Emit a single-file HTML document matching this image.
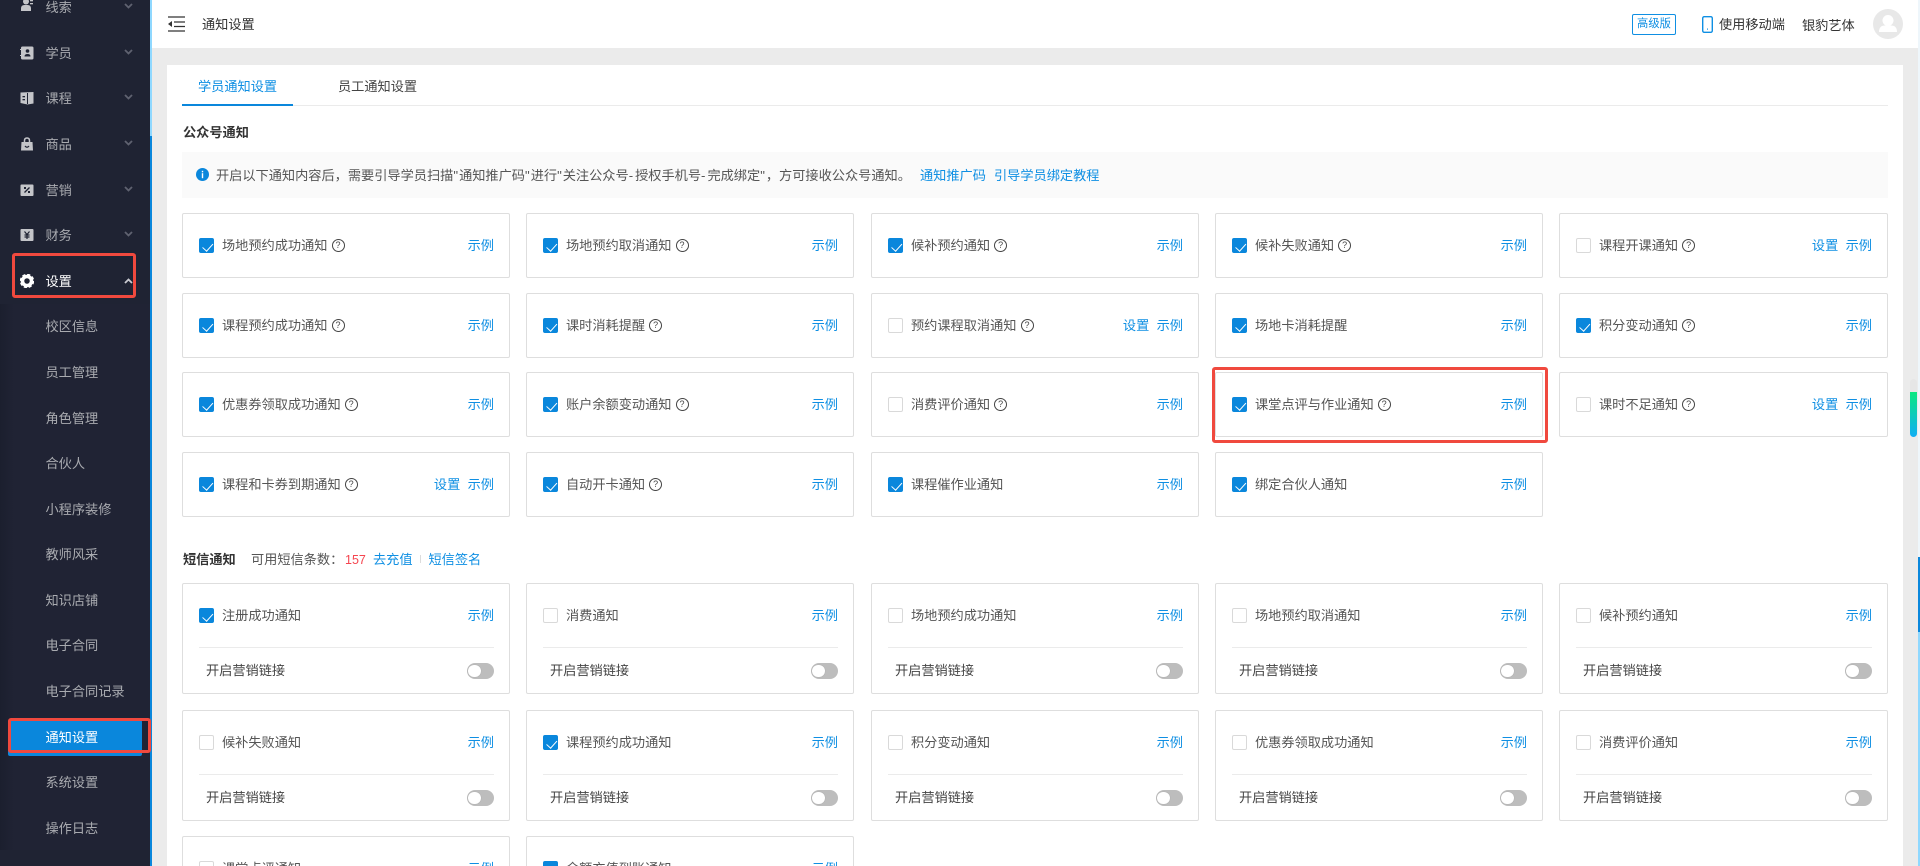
<!DOCTYPE html>
<html lang="zh-CN">
<head>
<meta charset="utf-8">
<title>通知设置</title>
<style>
*{box-sizing:border-box;margin:0;padding:0}
html,body{width:1920px;height:866px;overflow:hidden;background:#ebebeb}
body{position:relative;font-family:"Liberation Sans","Noto Sans CJK SC",sans-serif;font-size:13.2px;color:#555}
.a{position:absolute;white-space:nowrap}
.side{position:absolute;left:0;top:0;width:150px;height:866px;background:#1f2333}
.sub{position:absolute;left:0;top:304px;width:150px;height:546px;background:linear-gradient(90deg,#1b1f2e,#202334 14px)}
.m{position:absolute;left:45.5px;line-height:18px;color:#a9abb0;white-space:nowrap}
.ic{position:absolute;left:20px;width:14px;height:14px}
.ch{position:absolute;left:124px;width:9px;height:6px}
.card{position:absolute;width:328px;height:64.5px;background:#fff;border:1.2px solid #dedede;border-radius:2px}
.s{height:111px}
.e{height:30px;border-bottom:0;border-radius:2px 2px 0 0;overflow:hidden}
.b{position:absolute;left:16px;top:24px;width:15px;height:15px;border:1px solid #d9d9d9;border-radius:2px;background:#fff}
.on{background:#0a87dc;border-color:#0a87dc}
.on::after{content:"";position:absolute;left:4.5px;top:1.5px;width:4.5px;height:8.5px;border:solid #fff;border-width:0 1.2px 1.2px 0;transform:rotate(42deg)}
.t{position:absolute;left:39px;top:23px;line-height:18px;color:#555;white-space:nowrap}
.q{display:inline-block;width:13px;height:13px;margin-left:4px;border:1px solid #444;border-radius:50%;font:9px/11px "Liberation Sans",sans-serif;color:#444;text-align:center;vertical-align:2px}
.l{position:absolute;right:15px;top:23px;line-height:18px;color:#0f8fe3;white-space:nowrap}
.d{position:absolute;left:16px;right:15px;top:63px;height:1px;background:#ebebeb}
.k{position:absolute;left:23px;top:78px;line-height:18px;color:#444;white-space:nowrap}
.g{position:absolute;right:15px;top:79px;width:27px;height:15.5px;border-radius:8px;background:#bdbdbd}
.g::after{content:"";position:absolute;left:1px;top:1.5px;width:12.5px;height:12.5px;border-radius:50%;background:#fff;box-shadow:0 0 1px #999}
.c1{left:182px}.c2{left:526px}.c3{left:871px}.c4{left:1215px}.c5{left:1559px;width:329px}
.r{position:absolute;border:3px solid #f0493e;border-radius:3px}
.u{letter-spacing:1px}
.h{letter-spacing:2px}
</style>
</head>
<body>
<div class="side"></div>
<div class="sub"></div>
<div class="a" style="left:150px;top:0;width:2px;height:136px;background:#8fd8ff"></div>
<div class="a" style="left:150px;top:136px;width:2px;height:730px;background:#0a87dc"></div>

<svg class="ic" style="top:-2px" viewBox="0 0 14 14" fill="#c4c5c9"><circle cx="6" cy="3.5" r="3"/><path d="M1 13v-2.500q0-3.500 3.500-3.500h3q3.500 0 3.500 3.500V13z"/><rect x="10" y="2" width="3" height="1.300"/><rect x="10" y="5" width="3" height="1.300"/></svg>
<svg class="ic" style="top:46px" viewBox="0 0 14 14"><rect x="1" y="0.500" width="12.500" height="13" rx="1.500" fill="#c4c5c9"/><circle cx="7.500" cy="5" r="1.800" fill="#1f2333"/><path d="M4.500 10.500q0-2.500 3-2.500t3 2.500z" fill="#1f2333"/><rect x="0" y="3" width="2" height="1" fill="#c4c5c9"/><rect x="0" y="9" width="2" height="1" fill="#c4c5c9"/></svg>
<svg class="ic" style="top:91px" viewBox="0 0 14 14"><path d="M0.500 1.500L13.500 1V12.500L7.500 13.500L0.500 12z" fill="#c4c5c9"/><rect x="2.500" y="5" width="2.500" height="1.300" fill="#1f2333"/><rect x="2.500" y="8" width="2.500" height="1.300" fill="#1f2333"/><rect x="7" y="2" width="1" height="11" fill="#1f2333"/></svg>
<svg class="ic" style="top:137px" viewBox="0 0 14 14"><path d="M1.500 5h11l.5 8.500H1z" fill="#c4c5c9"/><path d="M4.500 5.500V3.500q0-2.500 2.500-2.500t2.500 2.500v2" fill="none" stroke="#c4c5c9" stroke-width="1.500"/><path d="M5 9q2 2.500 4 0" fill="none" stroke="#1f2333" stroke-width="1.200"/></svg>
<svg class="ic" style="top:183px" viewBox="0 0 14 14"><rect x="0.500" y="1.500" width="13" height="11.500" rx="1" fill="#c4c5c9"/><path d="M4.500 9.500L9.500 4.500" stroke="#1f2333" stroke-width="1.300"/><rect x="4" y="4" width="2" height="2" fill="#1f2333"/><rect x="8" y="8" width="2" height="2" fill="#1f2333"/></svg>
<svg class="ic" style="top:228px" viewBox="0 0 14 14"><rect x="0.500" y="1" width="13" height="12" rx="1" fill="#c4c5c9"/><path d="M4.500 3.500L7 6.500L9.500 3.500M7 6.500V11M4.500 7h5M4.500 9h5" fill="none" stroke="#1f2333" stroke-width="1.200"/></svg>
<svg class="ic" style="top:274px" viewBox="0 0 14 14"><circle cx="7" cy="7" r="4.500" fill="none" stroke="#fff" stroke-width="3.500"/><circle cx="7" cy="7" r="6" fill="none" stroke="#fff" stroke-width="2.500" stroke-dasharray="3 1.700"/></svg>

<svg class="ch" style="top:3px" viewBox="0 0 9 6"><path d="M1 1L4.500 4.500L8 1" fill="none" stroke="#5f6270" stroke-width="1.800"/></svg>
<svg class="ch" style="top:49px" viewBox="0 0 9 6"><path d="M1 1L4.500 4.500L8 1" fill="none" stroke="#5f6270" stroke-width="1.800"/></svg>
<svg class="ch" style="top:94px" viewBox="0 0 9 6"><path d="M1 1L4.500 4.500L8 1" fill="none" stroke="#5f6270" stroke-width="1.800"/></svg>
<svg class="ch" style="top:140px" viewBox="0 0 9 6"><path d="M1 1L4.500 4.500L8 1" fill="none" stroke="#5f6270" stroke-width="1.800"/></svg>
<svg class="ch" style="top:186px" viewBox="0 0 9 6"><path d="M1 1L4.500 4.500L8 1" fill="none" stroke="#5f6270" stroke-width="1.800"/></svg>
<svg class="ch" style="top:231px" viewBox="0 0 9 6"><path d="M1 1L4.500 4.500L8 1" fill="none" stroke="#5f6270" stroke-width="1.800"/></svg>
<svg class="ch" style="top:278px" viewBox="0 0 9 6"><path d="M1 5L4.500 1.500L8 5" fill="none" stroke="#c9cad0" stroke-width="1.800"/></svg>

<div class="m" style="top:-1px">线索</div>
<div class="m" style="top:45px">学员</div>
<div class="m" style="top:90px">课程</div>
<div class="m" style="top:136px">商品</div>
<div class="m" style="top:182px">营销</div>
<div class="m" style="top:227px">财务</div>
<div class="m" style="top:273px;color:#fff">设置</div>
<div class="m" style="top:318px">校区信息</div>
<div class="m" style="top:364px">员工管理</div>
<div class="m" style="top:410px">角色管理</div>
<div class="m" style="top:455px">合伙人</div>
<div class="m" style="top:501px">小程序装修</div>
<div class="m" style="top:546px">教师风采</div>
<div class="m" style="top:592px">知识店铺</div>
<div class="m" style="top:637px">电子合同</div>
<div class="m" style="top:683px">电子合同记录</div>
<div class="a" style="left:8px;top:720px;width:134px;height:36px;background:#0a87dc;border-radius:2px"></div>
<div class="m" style="top:729px;color:#fff">通知设置</div>
<div class="m" style="top:774px">系统设置</div>
<div class="m" style="top:820px">操作日志</div>
<div class="r" style="left:12px;top:253px;width:124px;height:44.500px"></div>
<div class="r" style="left:8px;top:718px;width:143px;height:35px"></div>

<div class="a" style="left:152px;top:0;width:1766px;height:48px;background:#fff"></div>
<svg class="a" style="left:168px;top:16px;width:17px;height:16px" viewBox="0 0 17 16"><path d="M0 1h17M6 6h11M6 10.500h11M0 15h17" stroke="#333" stroke-width="1.300"/><path d="M0 8L4 5v6z" fill="#333"/></svg>
<div class="a" style="left:202px;top:16px;line-height:18px;color:#333">通知设置</div>
<div class="a" style="left:1632px;top:14px;width:44px;height:21px;border:1.200px solid #0f8fe3;border-radius:2px;color:#0f8fe3;font-size:11.300px;line-height:19.500px;text-align:center">高级版</div>
<svg class="a" style="left:1702px;top:16px;width:11px;height:17px" viewBox="0 0 11 17"><rect x="0.700" y="0.700" width="9.600" height="15.600" rx="1.500" fill="none" stroke="#0f8fe3" stroke-width="1.400"/><rect x="5" y="12.500" width="1" height="1.200" fill="#0f8fe3"/></svg>
<div class="a" style="left:1719px;top:16px;line-height:18px;color:#333">使用移动端</div>
<div class="a" style="left:1802px;top:17px;line-height:18px;color:#333">银豹艺体</div>
<svg class="a" style="left:1873px;top:9px;width:30px;height:30px" viewBox="0 0 30 30"><circle cx="15" cy="15" r="15" fill="#e8e8e8"/><circle cx="15" cy="11.500" r="5.500" fill="#fff"/><path d="M6 23q0-6.500 6-6.500h6q6 0 6 6.500z" fill="#fff"/></svg>

<div class="a" style="left:167px;top:65px;width:1736px;height:801px;background:#fff"></div>
<div class="a" style="left:198px;top:78px;line-height:18px;color:#0f8fe3">学员通知设置</div>
<div class="a" style="left:338px;top:78px;line-height:18px;color:#444">员工通知设置</div>
<div class="a" style="left:182px;top:105px;width:1706px;height:1px;background:#ebebeb"></div>
<div class="a" style="left:182px;top:104px;width:111px;height:2px;background:#0a87dc"></div>
<div class="a" style="left:183px;top:124px;line-height:18px;color:#333;font-weight:700">公众号通知</div>
<div class="a" style="left:182px;top:152px;width:1706px;height:46px;background:#fafafa"></div>
<svg class="a" style="left:196px;top:168px;width:13px;height:13px" viewBox="0 0 13 13"><circle cx="6.500" cy="6.500" r="6.500" fill="#0a87dc"/><rect x="5.800" y="2.800" width="1.400" height="1.500" fill="#fff"/><rect x="5.800" y="5.200" width="1.400" height="5" fill="#fff"/></svg>
<div class="a" style="left:216px;top:167px;line-height:18px;color:#555">开启以下通知内容后，需要引导学员扫描<span class="u">"</span>通知推广码<span class="u">"</span>进行<span class="u">"</span>关注公众号<span class="h">-</span>授权手机号<span class="h">-</span>完成绑定<span class="u">"</span>，方可接收公众号通知。</div>
<div class="a" style="left:920px;top:167px;line-height:18px;color:#0f8fe3">通知推广码</div>
<div class="a" style="left:994px;top:167px;line-height:18px;color:#0f8fe3">引导学员绑定教程</div>

<div class="card c1" style="top:213px"><i class="b on"></i><span class="t">场地预约成功通知<span class="q">?</span></span><span class="l">示例</span></div>
<div class="card c2" style="top:213px"><i class="b on"></i><span class="t">场地预约取消通知<span class="q">?</span></span><span class="l">示例</span></div>
<div class="card c3" style="top:213px"><i class="b on"></i><span class="t">候补预约通知<span class="q">?</span></span><span class="l">示例</span></div>
<div class="card c4" style="top:213px"><i class="b on"></i><span class="t">候补失败通知<span class="q">?</span></span><span class="l">示例</span></div>
<div class="card c5" style="top:213px"><i class="b"></i><span class="t">课程开课通知<span class="q">?</span></span><span class="l">设置&nbsp;&nbsp;示例</span></div>

<div class="card c1" style="top:293px"><i class="b on"></i><span class="t">课程预约成功通知<span class="q">?</span></span><span class="l">示例</span></div>
<div class="card c2" style="top:293px"><i class="b on"></i><span class="t">课时消耗提醒<span class="q">?</span></span><span class="l">示例</span></div>
<div class="card c3" style="top:293px"><i class="b"></i><span class="t">预约课程取消通知<span class="q">?</span></span><span class="l">设置&nbsp;&nbsp;示例</span></div>
<div class="card c4" style="top:293px"><i class="b on"></i><span class="t">场地卡消耗提醒</span><span class="l">示例</span></div>
<div class="card c5" style="top:293px"><i class="b on"></i><span class="t">积分变动通知<span class="q">?</span></span><span class="l">示例</span></div>

<div class="card c1" style="top:372px"><i class="b on"></i><span class="t">优惠券领取成功通知<span class="q">?</span></span><span class="l">示例</span></div>
<div class="card c2" style="top:372px"><i class="b on"></i><span class="t">账户余额变动通知<span class="q">?</span></span><span class="l">示例</span></div>
<div class="card c3" style="top:372px"><i class="b"></i><span class="t">消费评价通知<span class="q">?</span></span><span class="l">示例</span></div>
<div class="card c4" style="top:372px"><i class="b on"></i><span class="t">课堂点评与作业通知<span class="q">?</span></span><span class="l">示例</span></div>
<div class="card c5" style="top:372px"><i class="b"></i><span class="t">课时不足通知<span class="q">?</span></span><span class="l">设置&nbsp;&nbsp;示例</span></div>

<div class="card c1" style="top:452px"><i class="b on"></i><span class="t">课程和卡券到期通知<span class="q">?</span></span><span class="l">设置&nbsp;&nbsp;示例</span></div>
<div class="card c2" style="top:452px"><i class="b on"></i><span class="t">自动开卡通知<span class="q">?</span></span><span class="l">示例</span></div>
<div class="card c3" style="top:452px"><i class="b on"></i><span class="t">课程催作业通知</span><span class="l">示例</span></div>
<div class="card c4" style="top:452px"><i class="b on"></i><span class="t">绑定合伙人通知</span><span class="l">示例</span></div>

<div class="r" style="left:1212px;top:367px;width:336px;height:76px"></div>

<div class="a" style="left:183px;top:551px;line-height:18px;color:#333;font-weight:700">短信通知</div>
<div class="a" style="left:251px;top:551px;line-height:18px;color:#555">可用短信条数：</div>
<div class="a" style="left:345px;top:551px;line-height:18px;color:#f5454f;font-size:12.500px">157</div>
<div class="a" style="left:373px;top:551px;line-height:18px;color:#0f8fe3">去充值</div>
<div class="a" style="left:420px;top:555px;width:1px;height:8px;background:#dcdcdc"></div>
<div class="a" style="left:428.500px;top:551px;line-height:18px;color:#0f8fe3">短信签名</div>

<div class="card s c1" style="top:583px"><i class="b on"></i><span class="t">注册成功通知</span><span class="l">示例</span><div class="d"></div><span class="k">开启营销链接</span><i class="g"></i></div>
<div class="card s c2" style="top:583px"><i class="b"></i><span class="t">消费通知</span><span class="l">示例</span><div class="d"></div><span class="k">开启营销链接</span><i class="g"></i></div>
<div class="card s c3" style="top:583px"><i class="b"></i><span class="t">场地预约成功通知</span><span class="l">示例</span><div class="d"></div><span class="k">开启营销链接</span><i class="g"></i></div>
<div class="card s c4" style="top:583px"><i class="b"></i><span class="t">场地预约取消通知</span><span class="l">示例</span><div class="d"></div><span class="k">开启营销链接</span><i class="g"></i></div>
<div class="card s c5" style="top:583px"><i class="b"></i><span class="t">候补预约通知</span><span class="l">示例</span><div class="d"></div><span class="k">开启营销链接</span><i class="g"></i></div>

<div class="card s c1" style="top:710px"><i class="b"></i><span class="t">候补失败通知</span><span class="l">示例</span><div class="d"></div><span class="k">开启营销链接</span><i class="g"></i></div>
<div class="card s c2" style="top:710px"><i class="b on"></i><span class="t">课程预约成功通知</span><span class="l">示例</span><div class="d"></div><span class="k">开启营销链接</span><i class="g"></i></div>
<div class="card s c3" style="top:710px"><i class="b"></i><span class="t">积分变动通知</span><span class="l">示例</span><div class="d"></div><span class="k">开启营销链接</span><i class="g"></i></div>
<div class="card s c4" style="top:710px"><i class="b"></i><span class="t">优惠券领取成功通知</span><span class="l">示例</span><div class="d"></div><span class="k">开启营销链接</span><i class="g"></i></div>
<div class="card s c5" style="top:710px"><i class="b"></i><span class="t">消费评价通知</span><span class="l">示例</span><div class="d"></div><span class="k">开启营销链接</span><i class="g"></i></div>

<div class="card e c1" style="top:836px"><i class="b"></i><span class="t">课堂点评通知</span><span class="l">示例</span></div>
<div class="card e c2" style="top:836px"><i class="b on"></i><span class="t">余额充值到账通知</span><span class="l">示例</span></div>

<div class="a" style="left:1910px;top:379px;width:7px;height:58px;border-radius:4px;background:linear-gradient(180deg,#e6e6e6 0,#e6e6e6 13px,#0be881 13px,#10aef5 100%)"></div>
<div class="a" style="left:1918px;top:0;width:2px;height:557px;background:#eef6fb"></div>
<div class="a" style="left:1918px;top:557px;width:2px;height:75px;background:#0a87dc"></div>
<div class="a" style="left:1918px;top:632px;width:2px;height:234px;background:#8fd8ff"></div>
</body>
</html>
